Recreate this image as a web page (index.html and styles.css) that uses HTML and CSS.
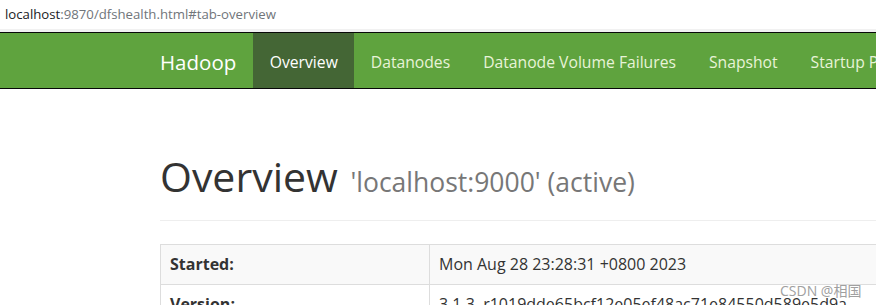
FILE: index.html
```
<html>
<head>
	<link rel="stylesheet" href="styles.css">
	<title>Namenode information</title>
</head>
<body>
	<div class="addressbar"><span class="host">localhost</span>:9870/dfshealth.html#tab-overview</div>

	<nav class="navbar">
		<div class="navinner">
			<a class="brand" href="#">Hadoop</a>
			<ul class="nav">
				<li class="active"><a href="#tab-overview">Overview</a></li>
				<li><a href="#tab-datanode">Datanodes</a></li>
				<li><a href="#tab-datanode-volume-failures">Datanode Volume Failures</a></li>
				<li><a href="#tab-snapshot">Snapshot</a></li>
				<li><a href="#tab-startup-progress">Startup Progress</a></li>
				<li><a href="#">Utilities</a></li>
			</ul>
		</div>
	</nav>

	<div class="container">
		<div class="page-header">
			<h1>Overview <small>'localhost:9000' (active)</small></h1>
		</div>
		<table class="table">
			<tr class="odd">
				<th>Started:</th>
				<td>Mon Aug 28 23:28:31 +0800 2023</td>
			</tr>
			<tr>
				<th>Version:</th>
				<td>3.1.3, r1019dde65bcf12e05ef48ac71e84550d589e5d9a</td>
			</tr>
		</table>
	</div>

	<div class="watermark">CSDN @相国</div>
</body>
</html>
```
FILE: styles.css
```
html, body{
	margin: 0;
	background-color: #fff;
	overflow: hidden;
}
body{
	font-family: 'Open Sans', 'Noto Sans CJK SC', sans-serif;
	color: #333;
	width: 1200px;
}
.addressbar{
	height: 29px;
	line-height: 29px;
	padding-left: 5px;
	font-size: 13.2px;
	color: #70757a;
	border-bottom: 3px solid #f1f1f1;
}
.addressbar .host{
	color: #202124;
}
.navbar{
	background-color: #5fa33e;
	border-top: 1px solid #080808;
	border-bottom: 1px solid #080808;
	height: 55px;
}
.navinner{
	display: flex;
	margin-left: 160px;
	height: 55px;
	white-space: nowrap;
}
.brand{
	color: #fff;
	font-size: 20.5px;
	padding-top: 3px;
	line-height: 52px;
	text-decoration: none;
	margin-right: 17px;
}
.nav{
	display: flex;
	list-style: none;
	margin: 0;
	padding: 0;
}
.nav li a{
	display: block;
	padding: 3px 16.5px 0;
	line-height: 52px;
	font-size: 15.7px;
	color: #e8f3d8;
	text-decoration: none;
}
.nav li.active a{
	background-color: #446635;
	color: #fff;
}
.container{
	margin-left: 160px;
}
.page-header{
	border-bottom: 1px solid #eee;
	padding-top: 65px;
	padding-bottom: 16px;
	margin-bottom: 23px;
}
.page-header h1{
	margin: 0;
	font-size: 41px;
	font-weight: normal;
	line-height: 44px;
}
.page-header small{
	font-size: 26.5px;
	color: #777;
	margin-left: 2px;
}
.table{
	border-collapse: collapse;
	width: 900px;
	font-size: 16px;
}
.table th, .table td{
	border: 1px solid #ddd;
	padding: 9px 9px;
	line-height: 21px;
	text-align: left;
}
.table th{
	width: 250px;
}
.table tr.odd{
	background-color: #f9f9f9;
}
.watermark{
	position: absolute;
	left: 780px;
	top: 280px;
	font-size: 14px;
	color: #a0a0a0;
}
```
